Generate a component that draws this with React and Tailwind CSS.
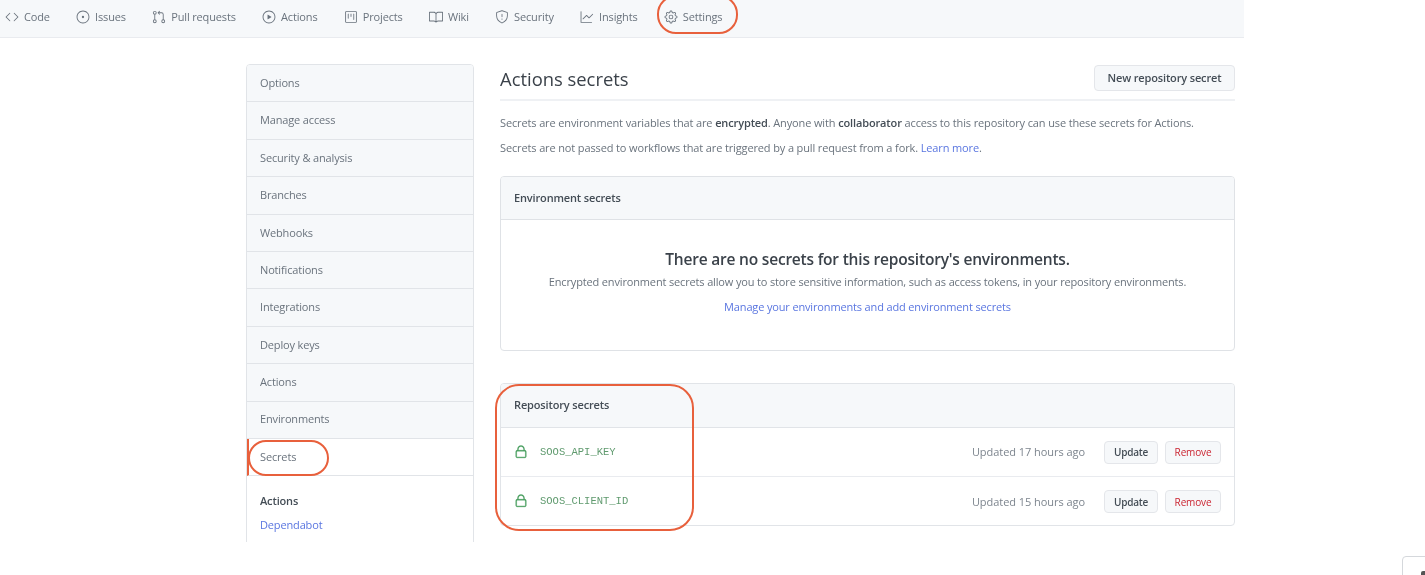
import React from "react";
import { GoCode, GoIssueOpened, GoGitPullRequest, GoPlay, GoProject, GoBook, GoShield, GoGraph, GoGear, GoLock } from "react-icons/go";

const nav = [
  ["Code", GoCode],
  ["Issues", GoIssueOpened],
  ["Pull requests", GoGitPullRequest],
  ["Actions", GoPlay],
  ["Projects", GoProject],
  ["Wiki", GoBook],
  ["Security", GoShield],
  ["Insights", GoGraph],
  ["Settings", GoGear],
];
const side = ["Options", "Manage access", "Security & analysis", "Branches", "Webhooks", "Notifications", "Integrations", "Deploy keys", "Actions", "Environments"];
const secrets = [
  ["SOOS_API_KEY", "Updated 17 hours ago"],
  ["SOOS_CLIENT_ID", "Updated 15 hours ago"],
];

export default function App() {
  return (
    <div className="relative w-[1425px] h-[575px] overflow-hidden bg-white text-[11px] tracking-[-0.15px] text-[#6a737d] font-['Open_Sans','Noto_Sans',sans-serif] blur-[0.4px]">
      <nav className="flex items-center gap-[26.25px] w-[1244px] h-[38px] pl-[5px] pb-[3px] bg-[#f6f8fa] border-b border-[#e9ebef]">
        {nav.map(([label, Icon]) => (
          <div key={label} className="flex items-center gap-[5px]">
            <Icon className="w-[14px] h-[14px] text-[#6a737d]" />
            <span>{label}</span>
          </div>
        ))}
      </nav>

      <div className="flex h-[504px] pl-[246px] pt-[26px] overflow-hidden">
        <aside className="w-[228px] h-[500px] shrink-0 border border-[#e1e4e8] rounded-t-[4px] overflow-hidden">
          {side.map((s) => (
            <div key={s} className="flex items-center h-[37.4px] pl-[13px] bg-[#f6f8fa] border-b border-[#e1e4e8]">{s}</div>
          ))}
          <div className="flex items-center h-[37.4px] pl-[11px] bg-white border-b border-l-[2px] border-b-[#e1e4e8] border-l-[#e8603c]">Secrets</div>
          <div className="pl-[13px] pt-[17px]">
            <div className="font-semibold text-[#444d56] leading-[16px]">Actions</div>
            <div className="text-[#5a76e0] mt-[8px] leading-[16px]">Dependabot</div>
          </div>
        </aside>

        <main className="w-[735px] ml-[26px] mt-[1px] shrink-0">
          <div className="flex items-start justify-between h-[36px] border-b-2 border-[#eff1f4]">
            <h1 className="mt-[1px] text-[18.4px] tracking-normal text-[#3b424a] leading-[26px]">Actions secrets</h1>
            <button className="w-[141px] h-[26px] rounded-[4px] border border-[#e4e6ea] bg-[#f6f8fa] text-[#444d56] font-semibold text-[11px]">New repository secret</button>
          </div>
          <p className="mt-[14px] leading-[16px] whitespace-nowrap tracking-[-0.13px] text-[#6a737d]">Secrets are environment variables that are <b className="font-semibold text-[#444d56]">encrypted</b>. Anyone with <b className="font-semibold text-[#444d56]">collaborator</b> access to this repository can use these secrets for Actions.</p>
          <p className="mt-[9px] leading-[16px] tracking-[-0.13px]">Secrets are not passed to workflows that are triggered by a pull request from a fork. <span className="text-[#5a76e0]">Learn more</span>.</p>

          <section className="mt-[20px] h-[175px] border border-[#dfe2e6] rounded-[4px] overflow-hidden">
            <div className="flex items-center h-[43px] pl-[13px] bg-[#f6f8fa] border-b border-[#dfe2e6] font-semibold text-[#444d56]">Environment secrets</div>
            <div className="flex flex-col items-center pt-[28px]">
              <h2 className="text-[15.5px] tracking-[-0.2px] font-semibold text-[#3b424a] leading-[22px]">There are no secrets for this repository's environments.</h2>
              <p className="mt-[4px] leading-[16px]">Encrypted environment secrets allow you to store sensitive information, such as access tokens, in your repository environments.</p>
              <span className="mt-[9px] leading-[16px] text-[#5a76e0]">Manage your environments and add environment secrets</span>
            </div>
          </section>

          <section className="mt-[32px] h-[143px] border border-[#e1e4e8] rounded-[4px] overflow-hidden">
            <div className="flex items-center h-[44px] pl-[13px] bg-[#f6f8fa] border-b border-[#e1e4e8] font-semibold text-[#444d56]">Repository secrets</div>
            {secrets.map(([name, upd], i) => (
              <div key={name} className={`flex items-center h-[49px] pl-[13px] pr-[13px] ${i === 0 ? "border-b border-[#e9ebef]" : ""}`}>
                <GoLock className="w-[14px] h-[14px] -mt-[1px] text-[#3f9a57] stroke-[0.6px]" />
                <span className="ml-[12px] mt-[1px] font-['Liberation_Mono',monospace] tracking-normal text-[10.5px] text-[#5f9a6e]">{name}</span>
                <span className="ml-auto mt-[1px] tracking-[-0.05px] text-[#7d858e]">{upd}</span>
                <button className="ml-[19px] w-[54px] h-[23px] pt-[1px] rounded-[4px] border border-[#e4e6ea] bg-[#f6f8fa] text-[#444d56] font-semibold tracking-[-0.25px] text-[10px]">Update</button>
                <button className="ml-[7px] w-[56px] h-[23px] pt-[1px] rounded-[4px] border border-[#e4e6ea] bg-[#f6f8fa] text-[#cb2431] text-[10px]">Remove</button>
              </div>
            ))}
          </section>
        </main>
      </div>

      <div className="absolute left-[657px] top-[-5px] w-[81px] h-[39px] rounded-[19px] border-2 border-[#e8603c]" />
      <div className="absolute left-[248px] top-[440px] w-[81px] h-[36px] rounded-[18px] border-2 border-[#e8603c]" />
      <div className="absolute left-[495px] top-[384px] w-[199px] h-[147px] rounded-[24px] border-2 border-[#e8603c]" />
      <div className="absolute left-[1402px] top-[556px] w-[40px] h-[40px] rounded-[4px] border border-[#d5d8dc] bg-white" />
      <div className="absolute left-[1421px] top-[571px] w-[8px] h-[8px] bg-[#555] rounded-[2px]" />
    </div>
  );
}
